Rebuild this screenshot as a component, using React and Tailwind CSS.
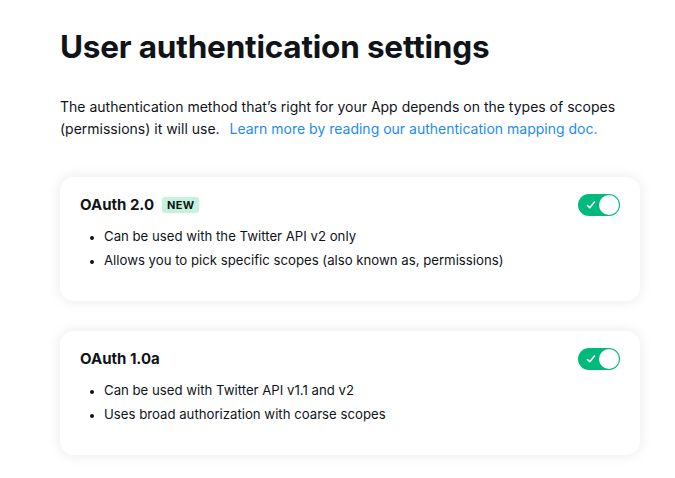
import { useState } from "react";

const methods = [
  {
    id: "oauth2",
    name: "OAuth 2.0",
    isNew: true,
    points: [
      "Can be used with the Twitter API v2 only",
      "Allows you to pick specific scopes (also known as, permissions)",
    ],
  },
  {
    id: "oauth1",
    name: "OAuth 1.0a",
    isNew: false,
    points: [
      "Can be used with Twitter API v1.1 and v2",
      "Uses broad authorization with coarse scopes",
    ],
  },
];

function Toggle({ on, onClick }) {
  return (
    <button
      onClick={onClick}
      className={`relative h-[22px] w-[42px] rounded-full flex items-center ${on ? "bg-[#00ba7c]" : "bg-[#cfd9de]"}`}
    >
      {/* check mark */}
      {on && (
        <svg className="absolute left-[8px] top-[6px] h-[10px] w-[10px]" viewBox="0 0 10 10" fill="none" stroke="white" strokeWidth="1.6" strokeLinecap="round" strokeLinejoin="round">
          <path d="M1.5 5.5l2.2 2.2L8.5 2" />
        </svg>
      )}
      <span
        className={`absolute top-[1px] h-[20px] w-[20px] rounded-full bg-white ${on ? "right-[1px]" : "left-[1px]"}`}
      />
    </button>
  );
}

export default function App() {
  const [enabled, setEnabled] = useState({ oauth2: true, oauth1: true });

  return (
    <div className="min-h-[478px] bg-white pl-[60px] pr-[35px] pt-[26px] text-[#0f1419]" style={{ fontFamily: "Inter, 'Liberation Sans', sans-serif" }}>
      <h1 className="text-[31.5px] font-bold leading-[42px] tracking-[-0.2px]">User authentication settings</h1>

      <p className="mt-[28px] text-[14px] leading-[22px] text-[#0f1419]">
        The authentication method that’s right for your App depends on the types of scopes
        (permissions) it will use.{" "}
        <a href="#" className="ml-[6px] text-[#1d8cf0]">Learn more by reading our authentication mapping doc.</a>
      </p>

      <div className="mt-[37px] flex flex-col gap-[30px]">
        {methods.map((m) => (
          <div key={m.id} className="rounded-[14px] bg-white px-5 pt-[17px] pb-[29px] shadow-[0_0_14px_rgba(0,0,0,0.09)]">
            <div className="flex items-center justify-between">
              <div className="flex items-center gap-2">
                <h2 className="text-[15px] font-bold leading-[22px]">{m.name}</h2>
                {m.isNew && (
                  <span className="rounded-[3px] bg-[#c5f2dd] px-[5px] text-[11px] font-bold leading-[16px] tracking-[0.3px] text-[#0f1419]">NEW</span>
                )}
              </div>
              <Toggle on={enabled[m.id]} onClick={() => setEnabled({ ...enabled, [m.id]: !enabled[m.id] })} />
            </div>
            <ul className="mt-[8px] list-disc pl-[24px] text-[13.2px] leading-[24px] marker:text-[11px]">
              {m.points.map((p) => (
                <li key={p}>{p}</li>
              ))}
            </ul>
          </div>
        ))}
      </div>
    </div>
  );
}
